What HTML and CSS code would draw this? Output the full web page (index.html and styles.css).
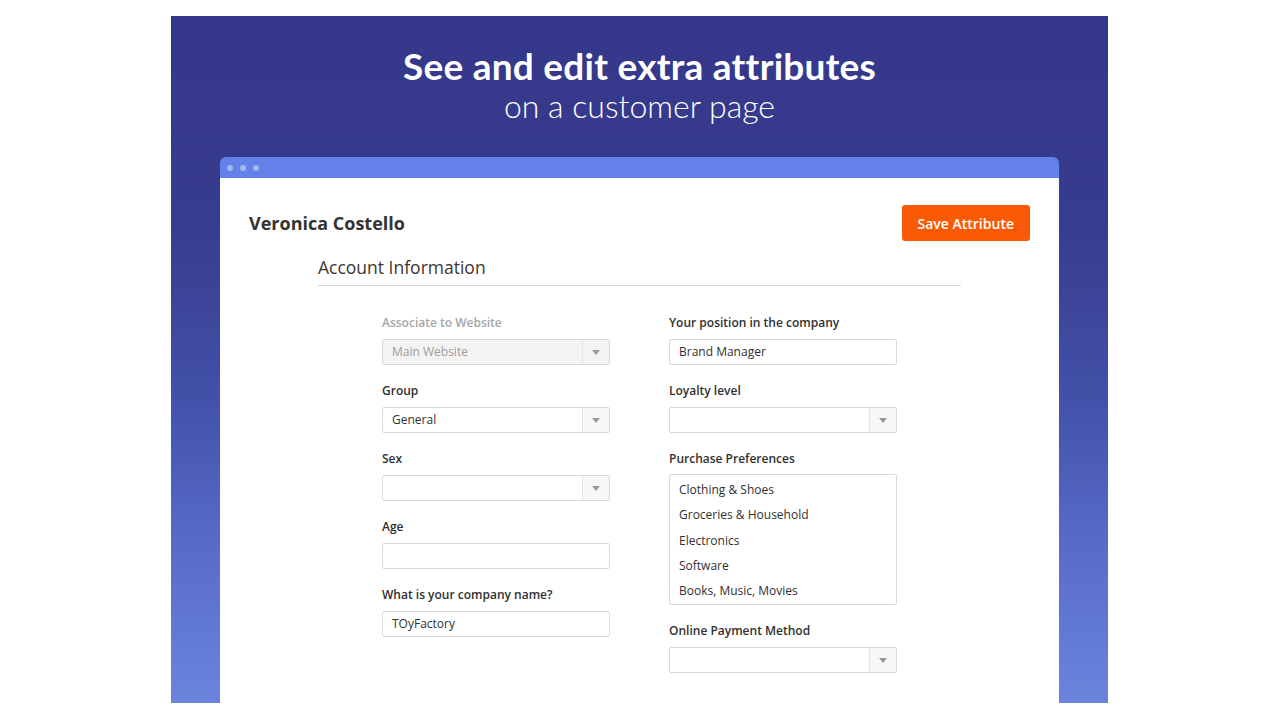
FILE: index.html
```html
<!DOCTYPE html>
<html lang="en">
<head>
<meta charset="UTF-8">
<title>Customer Attributes</title>
<link rel="stylesheet" href="styles.css">
</head>
<body>
<div class="panel">
    <h1 class="title">See and edit extra attributes</h1>
    <p class="subtitle">on a customer page</p>

    <div class="window">
        <div class="window-bar">
            <span class="dot"></span><span class="dot"></span><span class="dot"></span>
        </div>
        <div class="window-body">
            <div class="page-head">
                <h2 class="customer-name">Veronica Costello</h2>
                <button class="save-btn">Save Attribute</button>
            </div>

            <div class="section">
                <h3 class="section-title">Account Information</h3>
                <div class="fields">
                    <!-- left column -->
                    <div class="col">
                        <div class="field disabled">
                            <label>Associate to Website</label>
                            <div class="select"><span class="value">Main Website</span><span class="arrow"></span></div>
                        </div>
                        <div class="field">
                            <label>Group</label>
                            <div class="select"><span class="value">General</span><span class="arrow"></span></div>
                        </div>
                        <div class="field">
                            <label>Sex</label>
                            <div class="select"><span class="value"></span><span class="arrow"></span></div>
                        </div>
                        <div class="field">
                            <label>Age</label>
                            <div class="input"></div>
                        </div>
                        <div class="field">
                            <label>What is your company name?</label>
                            <div class="input">TOyFactory</div>
                        </div>
                    </div>
                    <!-- right column -->
                    <div class="col">
                        <div class="field">
                            <label>Your position in the company</label>
                            <div class="input">Brand Manager</div>
                        </div>
                        <div class="field">
                            <label>Loyalty level</label>
                            <div class="select"><span class="value"></span><span class="arrow"></span></div>
                        </div>
                        <div class="field">
                            <label>Purchase Preferences</label>
                            <ul class="multiselect">
                                <li>Clothing &amp; Shoes</li>
                                <li>Groceries &amp; Household</li>
                                <li>Electronics</li>
                                <li>Software</li>
                                <li>Books, Music, Movies</li>
                            </ul>
                        </div>
                        <div class="field">
                            <label>Online Payment Method</label>
                            <div class="select"><span class="value"></span><span class="arrow"></span></div>
                        </div>
                    </div>
                </div>
            </div>
        </div>
    </div>
</div>
</body>
</html>
```

FILE: styles.css
```css
/* page */
body {
    margin: 0;
    background: #ffffff;
    font-family: "Open Sans", Arial, sans-serif;
}

/* blue banner */
.panel {
    width: 937px;
    height: 687px;
    margin: 16px 0 0 171px;
    overflow: hidden;
    background: linear-gradient(180deg, #35388a 0%, #383c8e 30%, #4250a8 55%, #5a6fcc 80%, #6a84dc 100%);
    color: #ffffff;
    text-align: center;
}
.title {
    margin: 0;
    padding-top: 30px;
    font-family: Lato, sans-serif;
    font-weight: 700;
    font-size: 37px;
    letter-spacing: 0.25px;
    line-height: 40px;
}
.subtitle {
    margin: 0;
    font-family: Lato, sans-serif;
    font-weight: 300;
    font-size: 32px;
    line-height: 40px;
}

/* fake browser window */
.window {
    margin: 31px 49px 0;
    text-align: left;
    color: #303030;
}
.window-bar {
    height: 21px;
    background: #6381e8;
    border-radius: 6px 6px 0 0;
    display: flex;
    align-items: center;
    gap: 7px;
    padding-left: 7px;
}
.dot {
    width: 6px;
    height: 6px;
    border-radius: 50%;
    background: #a6b6f3;
}
.window-body {
    background: #ffffff;
    padding: 27px 29px 60px;
}

/* header row */
.page-head {
    display: flex;
    justify-content: space-between;
    align-items: center;
}
.customer-name {
    margin: 0;
    font-size: 18px;
    font-weight: 700;
    color: #333333;
}
.save-btn {
    height: 36px;
    padding: 0 16px;
    border: none;
    border-radius: 3px;
    background: #fa5a05;
    color: #ffffff;
    font-family: "Open Sans", Arial, sans-serif;
    font-size: 14px;
    font-weight: 600;
    cursor: pointer;
}

/* account section */
.section {
    margin: 0 69px;
}
.section-title {
    margin: 14px 0 0;
    padding-bottom: 5px;
    border-bottom: 1px solid #d6d6d6;
    font-size: 17.5px;
    font-weight: 400;
    line-height: 25px;
    color: #41362f;
}
.fields {
    display: grid;
    grid-template-columns: 228px 228px;
    column-gap: 59px;
    justify-content: center;
    padding-top: 29px;
}
.field {
    margin-bottom: 18px;
}
.field label {
    display: block;
    font-size: 12px;
    font-weight: 600;
    line-height: 16px;
    margin-bottom: 8px;
    color: #303030;
}
.field.disabled label {
    color: #a6a6a6;
}

/* controls */
.input,
.select {
    box-sizing: border-box;
    height: 26px;
    border: 1px solid #d9d9d9;
    border-radius: 2px;
    font-size: 12px;
    line-height: 24px;
    padding-left: 9px;
    color: #303030;
}
.select {
    display: flex;
    padding-left: 0;
}
.select .value {
    flex: 1;
    padding-left: 9px;
}
.select .arrow {
    width: 26px;
    border-left: 1px solid #e3e3e3;
    background: #f7f7f7;
    position: relative;
}
.select .arrow::after {
    content: "";
    position: absolute;
    left: 9px;
    top: 10px;
    border-left: 4px solid transparent;
    border-right: 4px solid transparent;
    border-top: 5px solid #9a9a9a;
}
.field.disabled .select {
    background: #f3f3f3;
    color: #9c9c9c;
}
.field.disabled .select .arrow {
    background: #f3f3f3;
}
.multiselect {
    box-sizing: border-box;
    height: 131px;
    margin: -1px 0 0;
    padding: 2px 0 0;
    list-style: none;
    border: 1px solid #d9d9d9;
    border-radius: 2px;
}
.multiselect li {
    font-size: 12px;
    line-height: 25.3px;
    padding-left: 9px;
    color: #303030;
}
```
